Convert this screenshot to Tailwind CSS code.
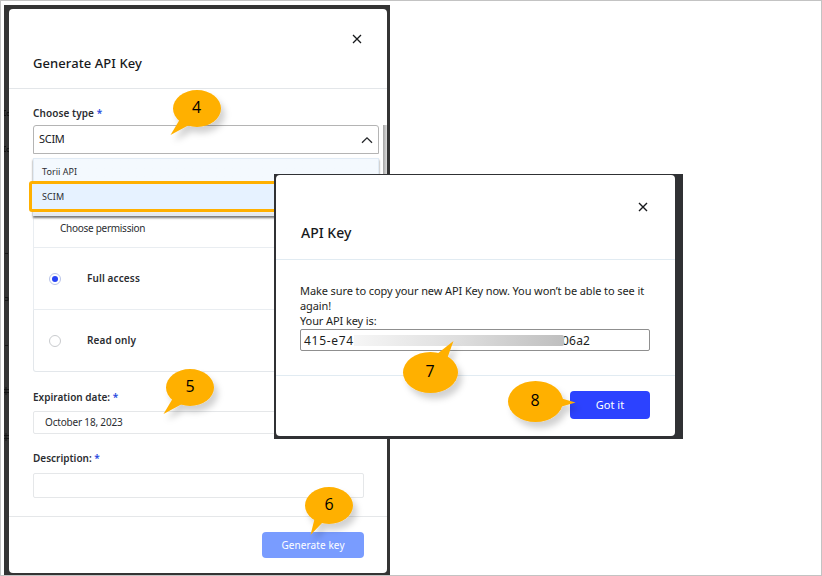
<!DOCTYPE html>
<html lang="en">
<head>
<meta charset="utf-8">
<title>Generate API Key</title>
<script src="https://cdn.jsdelivr.net/npm/@tailwindcss/browser@4"></script>
</head>
<body class="relative h-[576px] w-[822px] overflow-hidden border border-[#c3c3c3] bg-white font-['Noto_Sans',sans-serif] text-[#2b2d31]">

<!-- Generate API Key window -->
<section class="absolute left-[3px] top-[4px] h-[570px] w-[386px] overflow-hidden bg-[#343434] pt-[4px] pr-[3px] pb-[2px] pl-[5px]">
  <!-- Slivers of the dimmed page behind the window -->
  <svg class="absolute left-0 top-[100px]" width="5" height="350" viewBox="0 0 5 350" fill="none" stroke="#151515" stroke-width="1"><path d="M2 5.500H0v5h2M5 7.500H3v3h2M2 41.500H0v5h2M5 43.500H3v3h2M1 148.500h3M1 192.500h3v3H1M1 240.500h3M0 284.500h5M0 287.500h5M2 282v8M0 330.500h5M0 333.500h5M2 328v8"/></svg>
  <div class="relative flex h-full flex-col rounded-[4px] bg-white">
    <header class="relative flex h-[80px] shrink-0 items-start border-b border-[#e3e6e9] pl-[24px] pt-[44px]">
      <h1 class="text-[13px] leading-[20px] font-medium tracking-[0.08px] text-[#17191c]">Generate API Key</h1>
      <svg class="absolute left-[343px] top-[25px]" width="10" height="10" viewBox="0 0 10 10" fill="none" stroke="#17191c" stroke-width="1.3"><path d="M1 1l8 8M9 1l-8 8"/></svg>
    </header>
    <main class="relative h-[427px] shrink-0 pl-[24px]">
      <p class="pt-[16px] text-[10px] leading-[16px] font-semibold tracking-[0.08px]">Choose type <span class="text-[#2749e0]">*</span></p>
      <div class="mt-[4px] flex h-[29px] w-[346px] items-center justify-between rounded-t-[3px] border border-[#b4b4b4] pl-[5px] pr-[5px] text-[11px] text-[#17191c]">
        <span class="tracking-[-0.3px]">SCIM</span>
        <svg width="12" height="8" viewBox="0 0 12 8" fill="none" stroke="#25272a" stroke-width="1.3"><path d="M1 6.700L6 1.800l5 4.900"/></svg>
      </div>
      <div class="absolute left-[374px] top-[36px] h-[90px] w-[4px] bg-linear-to-r from-[#a4a4a4] to-[#dedede]"></div>
      <div class="mt-[4px] w-[346px]">
        <div class="flex h-[90px] items-end border-x border-b border-[#e9edf1] pl-[26px] pb-[11px] text-[10px] leading-[16px] tracking-[-0.28px]"><span>Choose permission</span></div>
        <div class="flex h-[62px] items-center border-x border-b border-[#e9edf1] pl-[15px] text-[10px] font-semibold">
          <span class="flex size-[12px] items-center justify-center rounded-full border border-[#b9c4e8]"><span class="size-[6px] rounded-full bg-[#2742f5]"></span></span>
          <span class="ml-[26px] tracking-[0.12px]">Full access</span>
        </div>
        <div class="flex h-[62px] items-center rounded-b-[3px] border-x border-b border-[#e3e7eb] pl-[15px] text-[10px] font-semibold">
          <span class="size-[12px] rounded-full border border-[#c9cbce]"></span>
          <span class="ml-[26px] tracking-[0.15px]">Read only</span>
        </div>
      </div>
      <div class="absolute left-[24px] top-[69px] h-[58px] w-[346px] border border-[#e1ebf5] bg-linear-to-b from-[#f4f9fe] from-90% to-[#e4e6e9] shadow-[0_2px_2px_#777]">
        <p class="pl-[8px] pt-[5px] text-[9px] leading-[16px] tracking-[0.05px]">Torii API</p>
        <div class="absolute -left-[5px] top-[22px] flex h-[31px] w-[351px] items-center rounded-[3px] border-3 border-[#ffb000] bg-[#e6f2ff] pl-[10px] text-[9px] tracking-[0.1px]">SCIM</div>
      </div>
      <p class="mt-[17px] text-[10px] leading-[16px] font-semibold">Expiration date: <span class="text-[#2749e0]">*</span></p>
      <div class="mt-[6px] flex h-[23px] w-[346px] items-center rounded-[2px] border border-[#e5e7e9] pl-[11px] text-[10px] tracking-[-0.18px]"><span>October 18, 2023</span></div>
      <p class="mt-[16px] text-[10px] leading-[16px] font-semibold">Description: <span class="text-[#2749e0]">*</span></p>
      <div class="mt-[7px] h-[25px] w-[331px] rounded-[2px] border border-[#e5e7e9]"></div>
    </main>
    <footer class="flex flex-1 items-start justify-end border-t border-[#e5e7e9] pr-[23px] pt-[15px]">
      <button class="h-[26px] w-[102px] rounded-[4px] bg-[#799cff] text-[10px] tracking-[0.1px] text-white">Generate key</button>
    </footer>
  </div>
</section>

<!-- API Key window -->
<section class="absolute left-[273px] top-[173px] h-[265px] w-[409px] bg-[#303134] pt-px pr-[8px] pb-[3px] pl-[2px]">
  <div class="flex h-full flex-col rounded-[4px] bg-white">
    <header class="relative h-[85px] shrink-0 border-b border-[#e1ebf2] pl-[25px] pt-[48px]">
      <h2 class="text-[14px] leading-[20px] font-medium text-[#17191c]">API Key</h2>
      <svg class="absolute left-[362px] top-[27px]" width="10" height="10" viewBox="0 0 10 10" fill="none" stroke="#17191c" stroke-width="1.4"><path d="M1 1l8 8M9 1l-8 8"/></svg>
    </header>
    <main class="h-[115px] shrink-0 pl-[24px] pt-[23px] text-[11px] leading-[15px] text-[#1c1e21]">
      <p class="whitespace-nowrap tracking-[-0.1px]">Make sure to copy your new API Key now. You won’t be able to see it<br>again!<br>Your API key is:</p>
      <div class="mt-[1px] flex h-[22px] w-[350px] items-center rounded-[2px] border border-[#8f8f8f] pl-[3px] text-[12px]">
        <span class="w-[50px] shrink-0 tracking-[0.7px]">415-e74</span><span class="relative h-[11px] w-[210px] shrink-0 rounded-r-[2px] bg-linear-to-r from-[#f6f6f6] via-[#dedede] to-[#bfbfbf]"></span><span class="-ml-[2px] tracking-[0.2px]">06a2</span>
      </div>
    </main>
    <footer class="flex flex-1 items-start justify-end border-t border-[#e1ebf2] pr-[25px] pt-[15px]">
      <button class="h-[28px] w-[80px] rounded-[4px] bg-[#2c42ff] text-[11px] text-white">Got it</button>
    </footer>
  </div>
</section>

<!-- Numbered callouts -->
<svg class="absolute -left-px -top-px" width="822" height="576" viewBox="0 0 822 576" font-family="'Open Sans','Noto Sans',sans-serif" font-size="16" font-weight="500" text-anchor="middle">
  <defs><filter id="shadow" x="-30%" y="-30%" width="180%" height="180%"><feDropShadow dx="4" dy="6" stdDeviation="3" flood-color="#000" flood-opacity=".18"/></filter></defs>
  <g fill="#ffb000">
    <g filter="url(#shadow)"><ellipse cx="197" cy="108.500" rx="24" ry="18.500"/><path d="M180 119L170.500 135L189 125z"/></g>
    <g filter="url(#shadow)"><ellipse cx="190" cy="387.500" rx="24" ry="18.500"/><path d="M173 398L163.500 414L182 404z"/></g>
    <g filter="url(#shadow)"><ellipse cx="329" cy="505.500" rx="24" ry="18.500"/><path d="M315 517L310.500 535L323 522z"/></g>
    <g filter="url(#shadow)"><ellipse cx="430.500" cy="372.500" rx="27.500" ry="20.500"/><path d="M437 354L453.500 341L447 359z"/></g>
    <g filter="url(#shadow)"><ellipse cx="535.500" cy="401.500" rx="27.500" ry="20.500"/><path d="M560 398L575.500 402.500L560 407z"/></g>
  </g>
  <g fill="#000"><text x="196.500" y="113">4</text><text x="190" y="392">5</text><text x="329" y="510">6</text><text x="430" y="377">7</text><text x="535" y="406">8</text></g>
</svg>
</body>
</html>
